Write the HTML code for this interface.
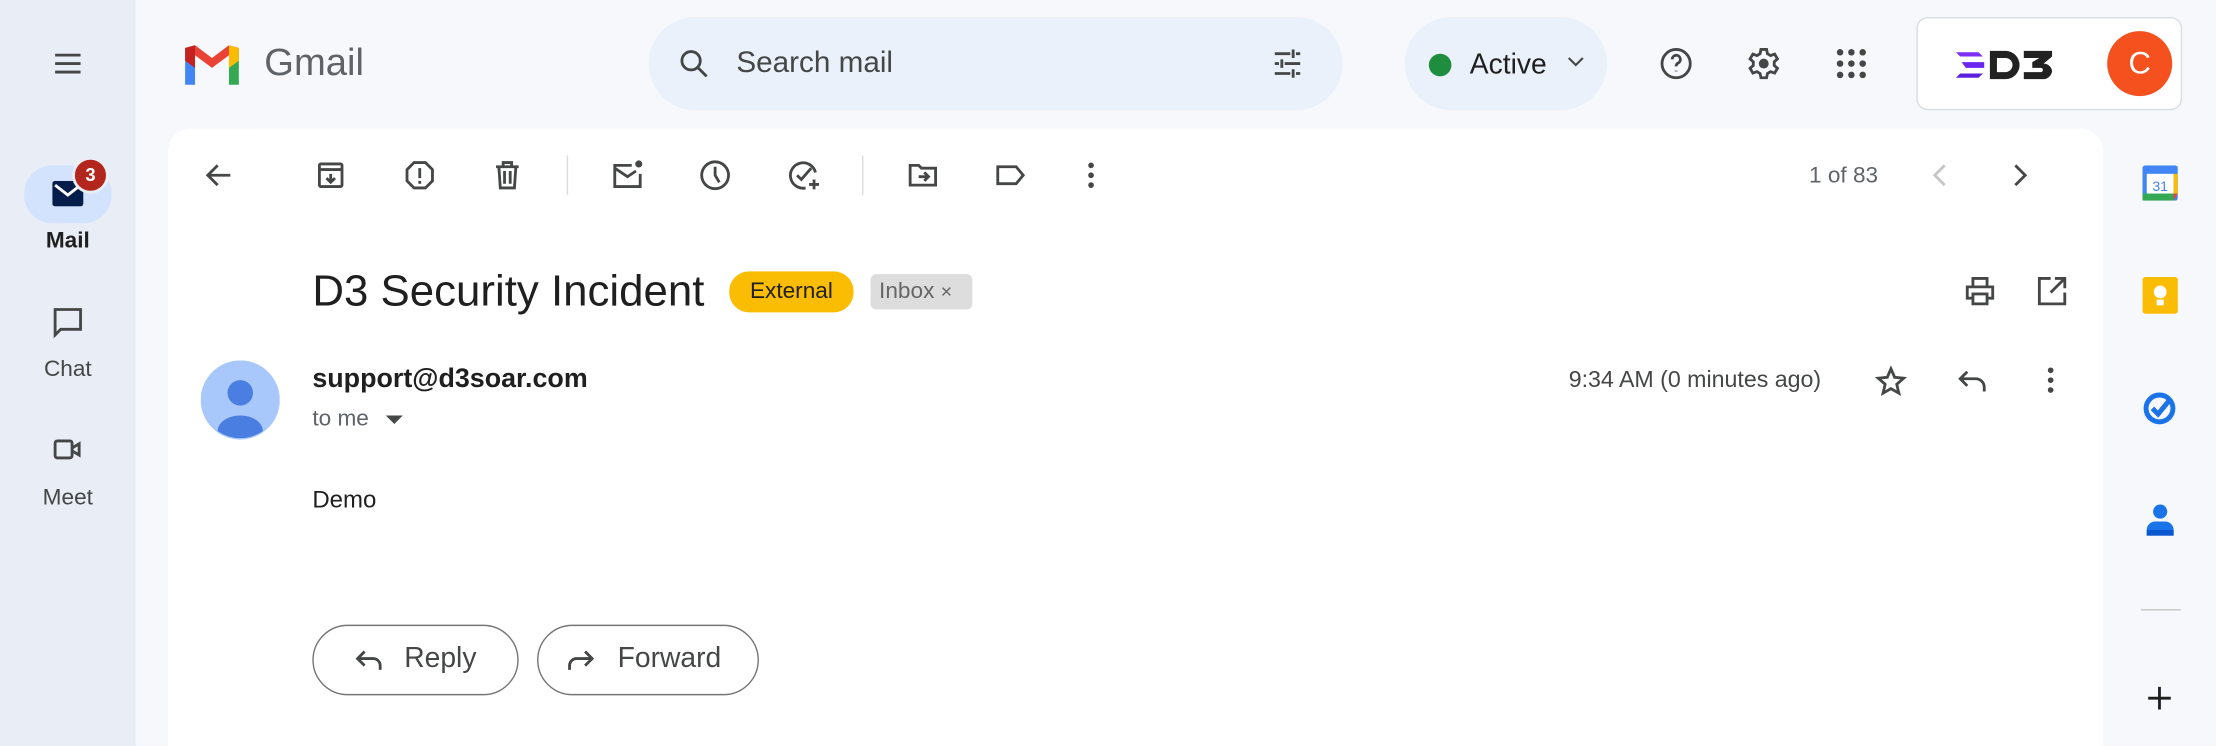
<!DOCTYPE html>
<html><head><meta charset="utf-8"><style>
html,body{margin:0;padding:0;width:2216px;height:746px;overflow:hidden;background:#f6f8fc}
#w{position:absolute;left:0;top:0;width:1568px;height:528px;overflow:hidden;transform:scale(1.41327);transform-origin:0 0;font-family:"Liberation Sans",sans-serif;color:#1f1f1f}
.a{position:absolute}
.ic{position:absolute;width:24px;height:24px;transform:translate(-12px,-12px)}
.ic path,.ic circle,.ic rect{fill:none;stroke:#444746;stroke-width:2}
</style></head><body><div id="w">
<div class="a" style="left:0;top:0;width:96px;height:528px;background:#e9eef6"></div>
<svg class="ic" style="left:48px;top:45px"><path d="M3 6h18M3 12h18M3 18h18"/></svg>
<svg class="a" style="left:128px;top:30px" width="44" height="32" viewBox="0 0 44 32">
<path d="M3 4v26h7V13z" fill="#4285f4"/><path d="M34 13v17h7V4z" fill="#34a853"/>
<path d="M3 4l19 14 19-14-7-2-12 9-12-9z" fill="#ea4335"/><path d="M3 4v9l7 5V2z" fill="#c5221f"/><path d="M41 4v9l-7 5V2z" fill="#fbbc04"/></svg>
<div class="a" style="left:187px;top:29px;font-size:27px;color:#5f6368">Gmail</div>
<div class="a" style="left:459px;top:12px;width:491px;height:66px;border-radius:33px;background:#eaf1fb"></div>
<svg class="ic" style="left:491px;top:45px"><circle cx="10" cy="10" r="6.5"/><path d="M15 15l6 6"/></svg>
<div class="a" style="left:521px;top:33px;font-size:21px;color:#444746">Search mail</div>
<svg class="ic" style="left:911px;top:45px"><path d="M3 5h11M18 5h3M16 2v6M3 12h3M10 12h11M8 9v6M3 19h11M18 19h3M16 16v6"/></svg>
<div class="a" style="left:994px;top:12px;width:143px;height:66px;border-radius:33px;background:#eaf1fb"></div>
<div class="a" style="left:1011px;top:38px;width:16px;height:16px;border-radius:50%;background:#1e8e3e"></div>
<div class="a" style="left:1040px;top:35px;font-size:20px;color:#1f1f1f">Active</div>
<svg class="a" style="left:1109px;top:40px" width="12" height="8"><path d="M1 1l5 5 5-5" fill="none" stroke="#444746" stroke-width="1.5"/></svg>
<svg class="ic" style="left:1186px;top:45px"><circle cx="12" cy="12" r="10"/><path d="M9.2 9a2.9 2.9 0 1 1 4 2.7c-.9.5-1.2 1-1.2 2.3M12 17v.5"/></svg>
<svg class="ic" style="left:1248px;top:45px"><path d="M10 2h4l.6 3 2.2 1.3 2.9-1 2 3.4-2.3 2 0 2.6 2.3 2-2 3.4-2.9-1-2.2 1.3-.6 3h-4l-.6-3-2.2-1.3-2.9 1-2-3.4 2.3-2v-2.6l-2.3-2 2-3.4 2.9 1L9.4 5z"/><circle cx="12" cy="12" r="2.5" style="fill:#444746"/></svg>
<svg class="a" style="left:1298px;top:33px" width="24" height="24"><g fill="#444746"><circle cx="4" cy="4" r="2.3"/><circle cx="12" cy="4" r="2.3"/><circle cx="20" cy="4" r="2.3"/><circle cx="4" cy="12" r="2.3"/><circle cx="12" cy="12" r="2.3"/><circle cx="20" cy="12" r="2.3"/><circle cx="4" cy="20" r="2.3"/><circle cx="12" cy="20" r="2.3"/><circle cx="20" cy="20" r="2.3"/></g></svg>
<div class="a" style="left:1356px;top:12px;width:186px;height:64px;border:1px solid #dadce0;border-radius:8px;background:#fff"></div>
<svg class="a" style="left:1382px;top:33px" width="82" height="26" viewBox="0 0 82 26">
<path d="M2 4h16l3 3H5z" fill="#7b2ff7"/><path d="M6 11h16v4H9z" fill="#6a26f0"/><path d="M5 19h16l-3 3H2z" fill="#5b1fe0"/>
<path d="M26 3h11a10 10 0 0 1 0 20H26zM31 8v10h6a5 5 0 0 0 0-10z" fill="#222"/>
<path d="M50 3h20v4l-6 5a6 6 0 0 1 6 5.5A6.5 6.5 0 0 1 63 23H50v-5h12a1.5 1.5 0 0 0 0-3H56v-4l5-3H50z" fill="#222"/></svg>
<div class="a" style="left:1491px;top:22px;width:46px;height:46px;border-radius:50%;background:#f4511e;color:#fff;font-size:22px;text-align:center;line-height:46px">C</div>
<div class="a" style="left:17px;top:117px;width:62px;height:41px;border-radius:20px;background:#d3e3fd"></div>
<svg class="a" style="left:37px;top:128px" width="22" height="18"><rect x="0" y="0" width="22" height="18" rx="2" fill="#041e49"/><path d="M2 3l9 7 9-7" fill="none" stroke="#fff" stroke-width="2"/></svg>
<div class="a" style="left:51px;top:111px;width:22px;height:22px;border-radius:50%;background:#b3261e;border:2px solid #e9eef6;color:#fff;font-size:13px;font-weight:bold;text-align:center;line-height:22px">3</div>
<div class="a" style="left:0;top:162px;width:96px;text-align:center;font-size:16px;font-weight:bold;color:#1f1f1f">Mail</div>
<svg class="ic" style="left:48px;top:228px"><path d="M3 3h18v14H7l-4 4z"/></svg>
<div class="a" style="left:0;top:253px;width:96px;text-align:center;font-size:16px;color:#444746">Chat</div>
<svg class="ic" style="left:48px;top:318px"><rect x="3" y="6" width="12" height="12" rx="1.5"/><path d="M15 11l5-3v8l-5-3"/></svg>
<div class="a" style="left:0;top:344px;width:96px;text-align:center;font-size:16px;color:#444746">Meet</div>
<div class="a" style="left:119px;top:91px;width:1369px;height:437px;border-radius:16px 16px 0 0;background:#fff"></div>
<svg class="ic" style="left:155px;top:124px"><path d="M20 12H5M11 5l-7 7 7 7"/></svg>
<svg class="ic" style="left:234px;top:124px"><rect x="4" y="4" width="16" height="16" rx="1"/><path d="M4 8h16M12 11v6M9 14l3 3 3-3"/></svg>
<svg class="ic" style="left:297px;top:124px"><path d="M8 3h8l5 5v8l-5 5H8l-5-5V8z"/><path d="M12 7v7M12 16v2"/></svg>
<svg class="ic" style="left:359px;top:124px"><path d="M4 6h16M9 6V3h6v3M6 6l1 15h10l1-15M10 9v9M14 9v9"/></svg>
<div class="a" style="left:401px;top:110px;width:1px;height:28px;background:#dadce0"></div>
<svg class="ic" style="left:444px;top:124px"><path d="M15 5H3v15h18v-9"/><path d="M3 7l9 6 6-4"/><circle cx="20" cy="4" r="2.5" style="fill:#444746;stroke:none"/></svg>
<svg class="ic" style="left:506px;top:124px"><circle cx="12" cy="12" r="9.5"/><path d="M12 6v6l3 5"/></svg>
<svg class="ic" style="left:569px;top:124px"><path d="M20 10a9 9 0 1 0-7 11"/><path d="M7 12l3 3 7-8M19 15v7M15.5 18.5h7"/></svg>
<div class="a" style="left:610px;top:110px;width:1px;height:28px;background:#dadce0"></div>
<svg class="ic" style="left:653px;top:124px"><path d="M3 5h6l2 2h10v12H3z"/><path d="M9 13h7M13 10l3 3-3 3"/></svg>
<svg class="ic" style="left:715px;top:124px"><path d="M3 6h13l5 6-5 6H3z"/></svg>
<svg class="a" style="left:768px;top:114px" width="8" height="20"><g fill="#444746"><circle cx="4" cy="3" r="2"/><circle cx="4" cy="10" r="2"/><circle cx="4" cy="17" r="2"/></g></svg>
<div class="a" style="left:1280px;top:116px;font-size:16px;color:#5f6368">1 of 83</div>
<svg class="ic" style="left:1373px;top:124px"><path d="M15 5l-7 7 7 7" style="stroke:#c4c7c5"/></svg>
<svg class="ic" style="left:1429px;top:124px"><path d="M9 5l7 7-7 7"/></svg>
<div class="a" style="left:221px;top:188px;font-size:31px;color:#1f1f1f">D3 Security Incident</div>
<div class="a" style="left:516px;top:192px;width:88px;height:29px;border-radius:14px;background:#fbbc04;font-size:16px;line-height:29px;text-align:center;color:#1f1f1f">External</div>
<div class="a" style="left:616px;top:194px;width:72px;height:25px;border-radius:4px;background:#dddddd;font-size:16px;line-height:25px;color:#666;padding-left:6px;box-sizing:border-box">Inbox <span style="font-size:14px">×</span></div>
<svg class="ic" style="left:1401px;top:206px"><path d="M7 8V3h10v5M7 17H3V9h18v8h-4"/><rect x="7" y="14" width="10" height="7"/></svg>
<svg class="ic" style="left:1452px;top:206px"><path d="M11 3H3v18h18v-8M14 3h7v7M21 3l-10 10"/></svg>
<svg class="a" style="left:142px;top:255px" width="56" height="56"><circle cx="28" cy="28" r="28" fill="#a8c7fa"/><circle cx="28" cy="23" r="9" fill="#4a7ee0"/><path d="M12 50a16 11 0 0 1 32 0a28 28 0 0 1-32 0z" fill="#4a7ee0"/></svg>
<div class="a" style="left:221px;top:258px;font-size:19px;font-weight:bold;color:#1f1f1f">support@d3soar.com</div>
<div class="a" style="left:221px;top:288px;font-size:16px;color:#5f6368">to me</div>
<svg class="a" style="left:273px;top:294px" width="12" height="7"><path d="M0 0h12L6 6z" fill="#444746"/></svg>
<div class="a" style="left:1110px;top:260px;font-size:16.4px;color:#444746">9:34 AM (0 minutes ago)</div>
<svg class="ic" style="left:1338px;top:270px"><path d="M12 3l2.6 6 6.4.6-4.9 4.3 1.5 6.3L12 17l-5.6 3.2 1.5-6.3L3 9.6 9.4 9z"/></svg>
<svg class="ic" style="left:1395px;top:270px"><path d="M21 19v-3a6 6 0 0 0-6-6H4M9 5l-5 5 5 5"/></svg>
<svg class="a" style="left:1447px;top:259px" width="8" height="20"><g fill="#444746"><circle cx="4" cy="3" r="2"/><circle cx="4" cy="10" r="2"/><circle cx="4" cy="17" r="2"/></g></svg>
<div class="a" style="left:221px;top:344px;font-size:17px;color:#1f1f1f">Demo</div>
<div class="a" style="left:221px;top:442px;width:146px;height:50px;box-sizing:border-box;border:1px solid #747775;border-radius:25px"></div>
<svg class="ic" style="left:261px;top:467px"><path d="M20 19v-3a5 5 0 0 0-5-5H5M9 6l-5 5 5 5"/></svg>
<div class="a" style="left:286px;top:455px;font-size:20px;color:#444746">Reply</div>
<div class="a" style="left:380px;top:442px;width:157px;height:50px;box-sizing:border-box;border:1px solid #747775;border-radius:25px"></div>
<svg class="ic" style="left:411px;top:467px"><path d="M4 19v-3a5 5 0 0 1 5-5h10M15 6l5 5-5 5"/></svg>
<div class="a" style="left:437px;top:455px;font-size:20px;color:#444746">Forward</div>
<svg class="a" style="left:1516px;top:117px" width="25" height="25"><rect x="0" y="0" width="25" height="25" rx="2" fill="#4285f4"/><rect x="3" y="6" width="19" height="14" fill="#fff"/><rect x="0" y="20" width="22" height="5" fill="#34a853"/><rect x="22" y="6" width="3" height="14" fill="#fbbc04"/><path d="M22 20h3l-3 5z" fill="#ea4335"/><text x="12.5" y="18" font-size="10" text-anchor="middle" fill="#4285f4" font-family="Liberation Sans">31</text></svg>
<div class="a" style="left:1516px;top:196px;width:25px;height:26px;border-radius:2px;background:#fbbc04"></div>
<div class="a" style="left:1524px;top:202px;width:9px;height:9px;border-radius:50%;background:#fff"></div>
<div class="a" style="left:1526px;top:212px;width:5px;height:4px;background:#fff"></div>
<svg class="a" style="left:1516px;top:276px" width="25" height="25"><circle cx="12" cy="13" r="9.5" fill="none" stroke="#1a73e8" stroke-width="3.5"/><path d="M7 13l4 4 9-11" fill="none" stroke="#1a73e8" stroke-width="3.5"/></svg>
<svg class="a" style="left:1516px;top:355px" width="25" height="26"><circle cx="12.5" cy="7" r="5" fill="#1a73e8"/><path d="M3 24v-4a6 6 0 0 1 6-6h7a6 6 0 0 1 6 6v4z" fill="#1a73e8"/><path d="M3 20h19v4H3z" fill="#0b57d0"/></svg>
<div class="a" style="left:1515px;top:431px;width:28px;height:1px;background:#c4c7c5"></div>
<svg class="ic" style="left:1528px;top:494px"><path d="M12 4v16M4 12h16" style="stroke:#1f1f1f"/></svg>
</div></body></html>
